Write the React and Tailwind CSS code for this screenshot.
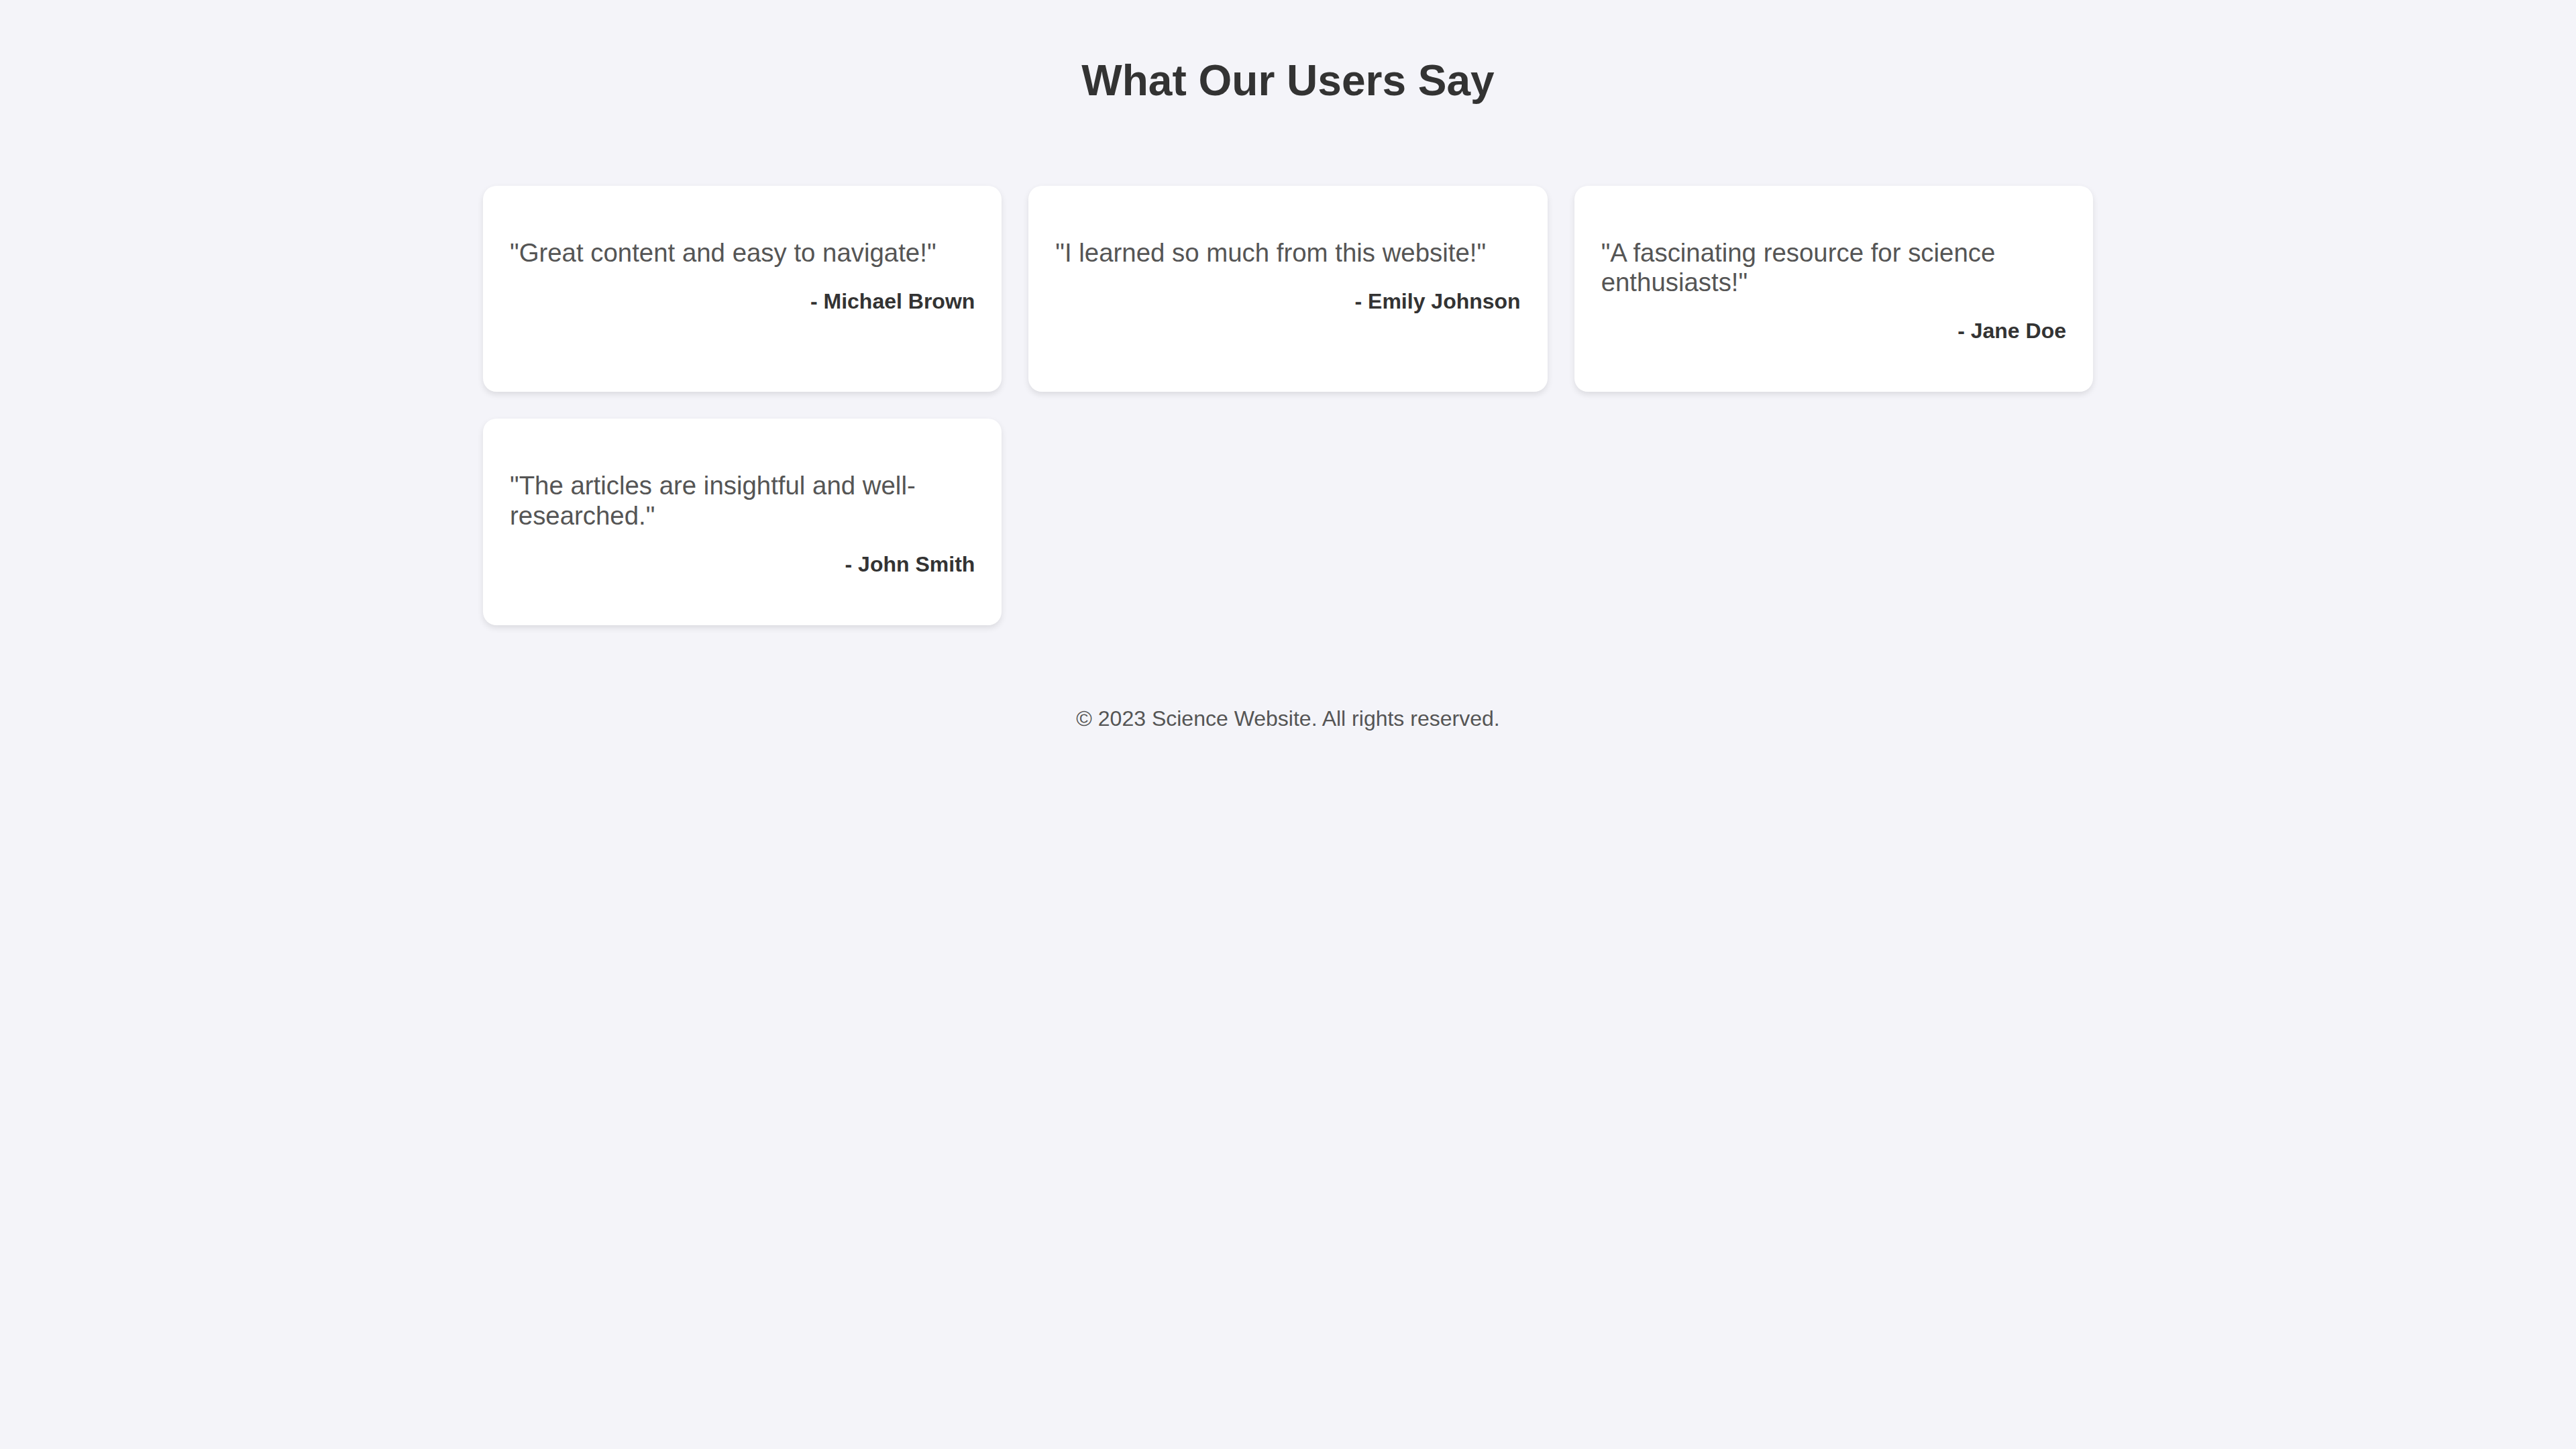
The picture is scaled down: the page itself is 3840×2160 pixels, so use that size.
import React from "react";

const testimonials = [
  { quote: '"Great content and easy to navigate!"', author: "- Michael Brown" },
  { quote: '"I learned so much from this website!"', author: "- Emily Johnson" },
  { quote: '"A fascinating resource for science enthusiasts!"', author: "- Jane Doe" },
  { quote: '"The articles are insightful and well-researched."', author: "- John Smith" },
];

export default function App() {
  return (
    <div className="min-h-screen bg-[#f4f4f9] font-['Liberation_Sans',Arial,sans-serif] pt-[83px]">
      <h2 className="text-center text-[64px] leading-[74px] font-bold text-[#333333]">
        What Our Users Say
      </h2>
      <div className="w-[2400px] mx-auto mt-[120px] grid grid-cols-3 gap-[40px]">
        {testimonials.map((t) => (
          <div
            key={t.author}
            className="bg-white rounded-[20px] p-[40px] shadow-[0_4px_10px_rgba(0,0,0,0.1)]"
          >
            <p className="mt-[38px] text-[38.4px] leading-[44.2px] text-[#555555]">{t.quote}</p>
            <p className="mt-[32px] mb-[32px] text-right text-[32px] leading-[37px] font-bold text-[#333333]">
              {t.author}
            </p>
          </div>
        ))}
      </div>
      <footer className="mt-[121px] text-center text-[32px] leading-[37px] text-[#555555]">
        © 2023 Science Website. All rights reserved.
      </footer>
    </div>
  );
}
